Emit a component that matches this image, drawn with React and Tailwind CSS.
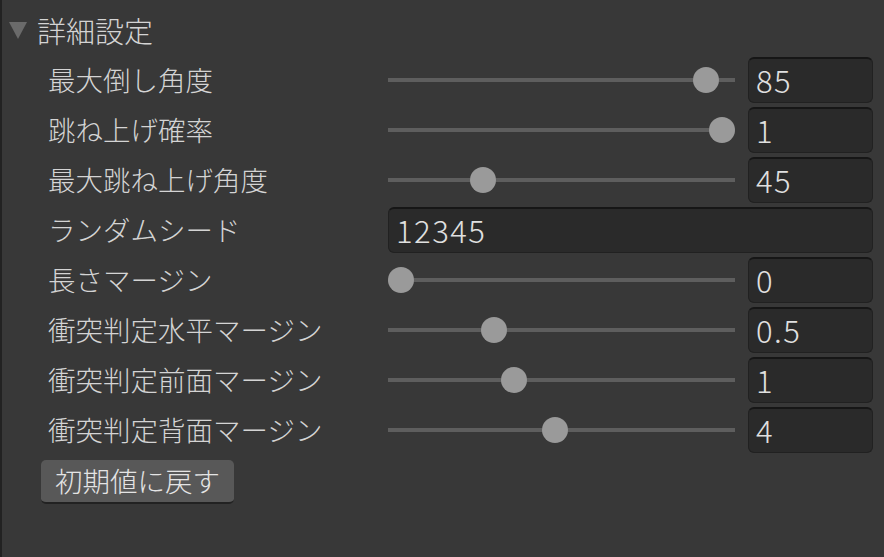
const font = { fontFamily: '"Noto Sans CJK JP", "Noto Sans", sans-serif' };

const rows = [
  { label: "最大倒し角度", value: "85", pos: 0.95 },
  { label: "跳ね上げ確率", value: "1", pos: 1 },
  { label: "最大跳ね上げ角度", value: "45", pos: 0.255 },
  { label: "ランダムシード", value: "12345", field: true },
  { label: "長さマージン", value: "0", pos: 0 },
  { label: "衝突判定水平マージン", value: "0.5", pos: 0.29 },
  { label: "衝突判定前面マージン", value: "1", pos: 0.352 },
  { label: "衝突判定背面マージン", value: "4", pos: 0.481 },
];

function Slider({ pos }) {
  return (
    <div className="relative h-[26px] flex-1 flex items-center">
      <div className="h-[4px] w-full bg-[#5e5e5e]" />
      {/* thumb travels between the track ends, inset by its radius */}
      <div
        className="absolute top-0 h-[26px] w-[26px] rounded-full bg-[#9a9a9a]"
        style={{ left: `calc(${pos} * (100% - 26px))` }}
      />
    </div>
  );
}

function Box({ value, className = "" }) {
  return (
    <div
      className={
        "h-[46px] rounded-[6px] bg-[#2a2a2a] border border-[#212121] border-t-[#161616] border-t-2 flex items-center pl-[7px] pb-[3px] text-[31px] tracking-[1.5px] font-light text-[#e0e0e0] leading-none " +
        className
      }
    >
      {value}
    </div>
  );
}

export default function App() {
  return (
    <div
      className="w-[884px] h-[557px] bg-[#383838] border-l-2 border-[#222222] text-[#d4d4d4] overflow-hidden"
      style={font}
    >
      {/* Header */}
      <div className="h-[60px] flex items-center pl-[5px] gap-[8px]">
        <svg width="22" height="20" viewBox="0 0 22 20">
          <polygon points="2,2 20,2 11,19" fill="#6a6a6a" />
        </svg>
        <span className="text-[29px] font-light leading-none">詳細設定</span>
      </div>

      <div className="flex flex-col pl-[46px] pr-[11px] -mt-[5px]">
        {rows.map((r) => (
          <div key={r.label} className="h-[50px] flex items-center">
            <div className="w-[340px] text-[27.5px] font-light leading-none whitespace-nowrap">{r.label}</div>
            {r.field ? (
              <Box value={r.value} className="flex-1" />
            ) : (
              <>
                <Slider pos={r.pos} />
                <Box value={r.value} className="w-[125px] ml-[13px]" />
              </>
            )}
          </div>
        ))}
      </div>

      <div className="pl-[39px] pt-[5px]">
        <button className="h-[44px] px-[14px] rounded-[5px] bg-[#585858] border-b-2 border-[#222222] text-[27.5px] font-light leading-none text-[#e4e4e4]">
          初期値に戻す
        </button>
      </div>
    </div>
  );
}
